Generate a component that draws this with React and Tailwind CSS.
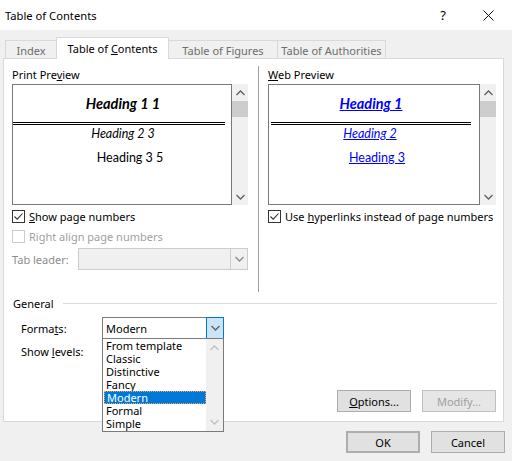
import { useState } from 'react';

const ui = { fontFamily: '"Noto Sans", "Liberation Sans", sans-serif' };
const preview = { fontFamily: 'Lato, "Noto Sans", sans-serif' };

function Chevron({ up = false, color = '#606060' }) {
  return (
    <svg width="9" height="6" viewBox="0 0 9 6" className="block">
      <path
        d={up ? 'M0.5 5 L4.5 1 L8.5 5' : 'M0.5 1 L4.5 5 L8.5 1'}
        fill="none"
        stroke={color}
        strokeWidth="1.3"
      />
    </svg>
  );
}

function Checkbox({ checked, disabled }) {
  return (
    <span
      className={`flex h-[13px] w-[13px] shrink-0 items-center justify-center border bg-white ${
        disabled ? 'border-[#cccccc]' : 'border-[#333333]'
      }`}
    >
      {checked && (
        <svg width="11" height="11" viewBox="0 0 11 11">
          <path d="M1.5 5.5 L4.2 8.2 L9.5 2.5" fill="none" stroke="#333" strokeWidth="1.1" />
        </svg>
      )}
    </span>
  );
}

function PreviewScroll() {
  return (
    <div className="flex w-[16px] flex-col bg-[#f0f0f0]">
      <div className="flex h-[17px] items-center justify-center">
        <Chevron up />
      </div>
      <div className="h-[16px] bg-[#cdcdcd]" />
      <div className="flex-1" />
      <div className="flex h-[17px] items-center justify-center">
        <Chevron />
      </div>
    </div>
  );
}

function DoubleRule({ width }) {
  return (
    <div className={`mt-[10px] flex flex-col gap-[1px] ${width}`}>
      <div className="h-px bg-black" />
      <div className="h-px bg-black" />
    </div>
  );
}

function Tab({ label, active, width }) {
  if (active) {
    return (
      <div
        className={`relative z-10 -mb-px flex h-[22px] items-center justify-center border border-b-0 border-[#d9d9d9] bg-white text-black ${width}`}
      >
        {label}
      </div>
    );
  }
  return (
    <div
      className={`flex h-[18px] items-center justify-center border border-b-0 border-[#d9d9d9] bg-[#f0f0f0] pt-px text-[#6d6d6d] ${width}`}
    >
      {label}
    </div>
  );
}

function Button({ children, disabled, primary }) {
  return (
    <div
      className={`flex h-[22px] w-[74px] items-center justify-center ${
        primary ? 'border-2 border-[#0078d7]' : 'border'
      } ${disabled ? 'border-[#bfbfbf] bg-[#e6e6e6] text-[#a0a0a0]' : 'border-[#adadad] bg-[#e1e1e1] text-black'}`}
    >
      {children}
    </div>
  );
}

const formats = ['From template', 'Classic', 'Distinctive', 'Fancy', 'Modern', 'Formal', 'Simple'];

export default function App() {
  const [selected] = useState('Modern');

  return (
    <div
      style={ui}
      className="flex h-[461px] w-[512px] flex-col whitespace-nowrap bg-[#f0f0f0] text-[11px] leading-[15px] text-black"
    >
      {/* Title bar */}
      <div className="flex h-[30px] shrink-0 items-center bg-white pl-[5px] text-[11.2px]">
        <span>Table of Contents</span>
        <span className="ml-auto mr-[37px] text-[13px]">?</span>
        <svg width="11" height="11" viewBox="0 0 11 11" className="mr-[18px]">
          <path d="M0.5 0.5 L10.5 10.5 M10.5 0.5 L0.5 10.5" stroke="#111" strokeWidth="1" />
        </svg>
      </div>

      {/* Tabs */}
      <div className="flex items-end pl-[5px] pt-[7px]">
        <Tab label="Index" width="w-[52px]" />
        <div className="-ml-px">
          <Tab
            active
            width="w-[113px]"
            label={
              <span>
                Table of <u>C</u>ontents
              </span>
            }
          />
        </div>
        <div className="-ml-px">
          <Tab label="Table of Figures" width="w-[110px]" />
        </div>
        <div className="-ml-px">
          <Tab label="Table of Authorities" width="w-[109px]" />
        </div>
      </div>

      {/* Tab page */}
      <div className="mx-[3px] flex h-[364px] w-[501px] shrink-0 flex-col border border-[#d9d9d9] bg-white">
        <div className="mt-[7px] flex">
          {/* Print preview column */}
          <div className="ml-[8px] flex w-[236px] flex-col">
            <div className="h-[18px] leading-[18px]">
              Print Pre<u>v</u>iew
            </div>
            <div className="flex h-[121px]">
              <div style={preview} className="flex w-[220px] flex-col border border-[#7a7a7a] bg-white">
                <div className="mt-[10px] pl-[2px] text-center text-[14.5px] font-bold italic leading-[17px]">
                  Heading 1 1
                </div>
                <DoubleRule width="w-[212px]" />
                <div className="mt-px pl-[2px] text-center text-[12.5px] italic leading-[16px]">Heading 2 3</div>
                <div className="mt-[8px] pl-[16px] text-center text-[12.5px] leading-[16px]">Heading 3 5</div>
              </div>
              <PreviewScroll />
            </div>
            <label className="mt-[5px] flex h-[13px] items-center gap-[4px]">
              <Checkbox checked />
              <span>
                <u>S</u>how page numbers
              </span>
            </label>
            <label className="mt-[7px] flex h-[13px] items-center gap-[4px] text-[#a0a0a0]">
              <Checkbox disabled />
              <span>Right align page numbers</span>
            </label>
            <div className="mt-[5px] flex h-[22px] items-center">
              <span className="w-[66px] text-[#8c8c8c]">Tab leader:</span>
              <div className="flex h-[22px] flex-1 border border-[#cccccc] bg-[#f0f0f0]">
                <div className="flex-1" />
                <div className="flex w-[17px] items-center justify-center border-l border-[#cccccc]">
                  <Chevron color="#8c8c8c" />
                </div>
              </div>
            </div>
          </div>

          <div className="ml-[10px] h-[226px] w-px bg-[#a0a0a0]" />

          {/* Web preview column */}
          <div className="ml-[9px] flex w-[229px] flex-col">
            <div className="h-[18px] leading-[18px]">
              <u>W</u>eb Preview
            </div>
            <div className="flex h-[121px]">
              <div style={preview} className="flex w-[212px] flex-col border border-[#7a7a7a] bg-white text-[#0000ff]">
                <div className="mt-[10px] pr-[6px] text-center text-[14.5px] font-bold italic leading-[17px] underline">
                  Heading 1
                </div>
                <DoubleRule width="ml-[2px] w-[200px]" />
                <div className="mt-px pr-[8px] text-center text-[12.5px] italic leading-[16px] underline">Heading 2</div>
                <div className="mt-[8px] pl-[6px] text-center text-[12.5px] leading-[16px] underline">Heading 3</div>
              </div>
              <PreviewScroll />
            </div>
            <label className="mt-[5px] flex h-[13px] items-center gap-[4px]">
              <Checkbox checked />
              <span>
                Use <u>h</u>yperlinks instead of page numbers
              </span>
            </label>
          </div>
        </div>

        {/* General group */}
        <div className="ml-[9px] mr-[6px] mt-[4px] flex h-[15px] items-center">
          <span>General</span>
          <div className="ml-[9px] h-px flex-1 bg-[#dcdcdc]" />
        </div>

        <div className="relative ml-[17px] mt-[6px] flex h-[22px] items-center">
          <span className="w-[81px]">
            Forma<u>t</u>s:
          </span>
          <div className="relative flex h-[22px] w-[122px] border border-[#7a7a7a] bg-white">
            <span className="flex flex-1 items-center pl-[3px]">{selected}</span>
            <div className="-my-px -mr-px flex w-[18px] items-center justify-center border border-[#0078d7] bg-[#cce4f7]">
              <Chevron />
            </div>

            {/* Open list */}
            <div className="absolute left-[-1px] top-[20px] z-20 flex h-[94px] w-[122px] border border-[#7a7a7a] bg-white">
              <div className="flex flex-1 flex-col pl-px">
                {formats.map((f) => (
                  <div
                    key={f}
                    className={`flex h-[13px] items-center pl-[2px] leading-[12px] ${
                      f === selected
                        ? 'border border-dotted border-[#f7a35c] bg-[#0078d7] pl-[1px] text-white'
                        : ''
                    }`}
                  >
                    {f}
                  </div>
                ))}
              </div>
              <div className="flex w-[17px] flex-col justify-between bg-[#f0f0f0] py-[6px]">
                <div className="flex justify-center">
                  <Chevron up color="#c0c0c0" />
                </div>
                <div className="flex justify-center">
                  <Chevron color="#c0c0c0" />
                </div>
              </div>
            </div>
          </div>
        </div>

        <div className="ml-[17px] mt-[5px] h-[16px] leading-[16px]">
          Show <u>l</u>evels:
        </div>

        <div className="mr-[7px] mt-[30px] flex justify-end gap-[11px]">
          <Button>
            <span>
              <u>O</u>ptions...
            </span>
          </Button>
          <Button disabled>Modify...</Button>
        </div>
      </div>

      {/* Dialog buttons */}
      <div className="mr-[7px] mt-[9px] flex justify-end gap-[11px]">
        <Button primary>OK</Button>
        <Button>Cancel</Button>
      </div>
    </div>
  );
}
